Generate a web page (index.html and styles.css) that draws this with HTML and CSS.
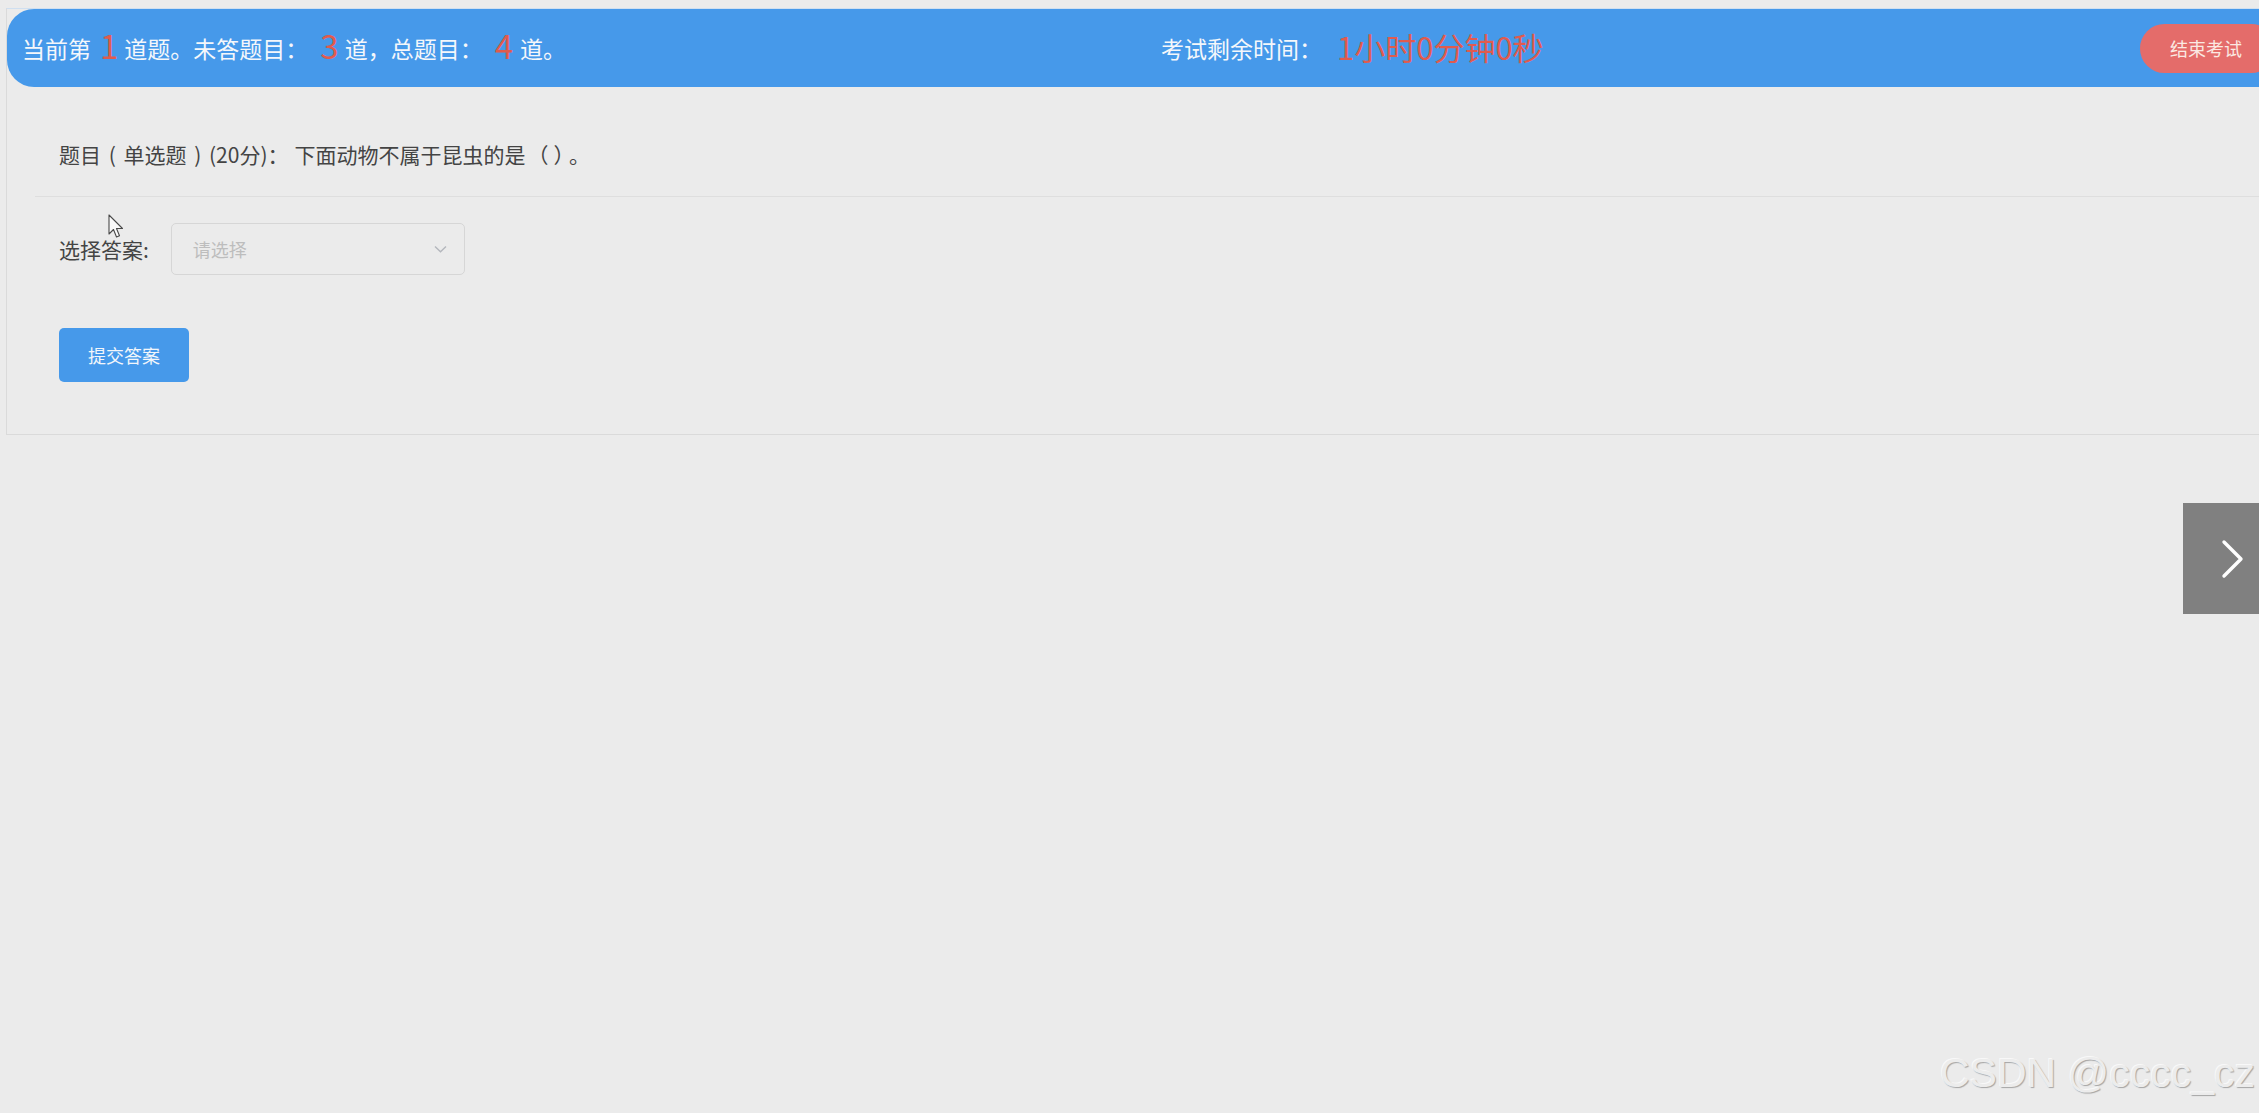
FILE: index.html
```html
<!DOCTYPE html>
<html lang="zh-CN">
<head>
<meta charset="utf-8">
<title>考试</title>
<link rel="stylesheet" href="styles.css">
</head>
<body>
<div class="page">
  <div class="exam">
    <div class="exam-header">
      <div class="progress">当前第<span class="num num-a">1</span>道题。未答题目：<span class="num num-b">3</span>道，总题目：<span class="num num-c">4</span>道。</div>
      <div class="timer">考试剩余时间：<span class="timer-value">1小时0分钟0秒</span></div>
      <button class="end-btn">结束考试</button>
    </div>
    <div class="exam-body">
      <div class="q-title"><span class="q-meta">题目 ( 单选题 ) (20分)：</span><span class="q-text">下面动物不属于昆虫的是<span class="paren">（）</span>。</span></div>
      <div class="q-body">
        <div class="answer-row">
          <span class="answer-label">选择答案:</span>
          <div class="select">
            <span class="placeholder">请选择</span>
            <svg class="chevron" width="13" height="8" viewBox="0 0 13 8"><path d="M1 1.5 L6.5 6.8 L12 1.5" fill="none" stroke="#b4b7bd" stroke-width="1.4"/></svg>
          </div>
        </div>
        <button class="submit-btn">提交答案</button>
      </div>
    </div>
  </div>
</div>

<svg class="cursor" width="16" height="26" viewBox="0 0 16 26"><path d="M1 1 L1 20 L5.5 15.5 L8.5 23 L11.5 21.8 L8.5 14.5 L14.5 14.5 Z" fill="#fafafa" stroke="#4a4a4a" stroke-width="1.1" stroke-linejoin="round"/></svg>

<div class="next-tab">
  <svg width="24" height="40" viewBox="0 0 24 40"><path d="M3 3 L20 20 L3 37" fill="none" stroke="#ffffff" stroke-width="3.4" stroke-linecap="round" stroke-linejoin="round"/></svg>
</div>

<div class="watermark">CSDN @cccc_cz</div>
</body>
</html>
```

FILE: styles.css
```css
html, body {
  margin: 0;
  padding: 0;
}
body {
  background: #ebebeb;
  font-family: "Noto Sans CJK SC", "Noto Sans", sans-serif;
  overflow: hidden;
  width: 2259px;
  height: 1113px;
  position: relative;
}
.page {
  padding: 8px 0 0 6px;
  width: 2300px;
}
.exam {
  border: 1px solid #dadada;
  border-top-color: #cfdff0;
  width: 2290px;
  box-sizing: border-box;
}
.exam-header {
  display: flex;
  align-items: center;
  height: 78px;
  background: #4699ea;
  border-radius: 27px 0 0 27px;
  padding: 0 0 0 15px;
  color: #f4f7fb;
  font-size: 23px;
  white-space: nowrap;
}
.progress {
  flex: 0 0 1139px;
  display: flex;
  align-items: center;
}
.num {
  color: #e05b4e;
  font-size: 33px;
  line-height: 30px;
  position: relative;
  top: -3px;
}
.num-a { margin: 0 6px 0 9px; }
.num-b { margin: 0 6px 0 12px; }
.num-c { margin: 0 7px 0 12px; }
.timer {
  display: flex;
  align-items: center;
}
.timer-value {
  color: #e05b4e;
  font-size: 31px;
  margin-left: 15px;
  position: relative;
  top: -2px;
}
.end-btn {
  margin-left: auto;
  margin-right: 19px;
  height: 49px;
  width: 136px;
  border: none;
  border-radius: 25px;
  background: #e46c6a;
  color: #fbe9e2;
  font-family: "Noto Sans CJK SC", sans-serif;
  font-size: 18px;
  padding: 0 0 0 4px;
  text-align: left;
  text-indent: 26px;
}
.exam-body {
  padding: 0 0 0 28px;
}
.q-title {
  padding: 55px 0 29px 24px;
  line-height: 25px;
  font-size: 21px;
  color: #444;
  border-bottom: 1px solid #dedede;
}
.q-meta {
  word-spacing: 3px;
}
.q-text {
  margin-left: 6px;
}
.paren {
  letter-spacing: 5px;
  margin-left: 2px;
}
.q-body {
  padding: 26px 0 52px 24px;
}
.answer-row {
  display: flex;
  align-items: center;
  gap: 22px;
}
.answer-label {
  font-size: 21px;
  color: #444;
}
.select {
  width: 294px;
  height: 52px;
  box-sizing: border-box;
  border: 1px solid #d6d6d6;
  border-radius: 5px;
  display: flex;
  align-items: center;
  padding: 0 17px 0 21px;
}
.placeholder {
  font-size: 18px;
  color: #bdbdbd;
  flex: 1;
}
.chevron {
  display: block;
}
.submit-btn {
  display: block;
  margin-top: 53px;
  width: 130px;
  height: 54px;
  border: none;
  border-radius: 5px;
  background: #4699ea;
  color: #f2f6fb;
  font-family: "Noto Sans CJK SC", sans-serif;
  font-size: 18px;
  padding: 0;
}
.cursor {
  position: absolute;
  left: 108px;
  top: 214px;
}
.next-tab {
  position: absolute;
  left: 2183px;
  top: 503px;
  width: 76px;
  height: 111px;
  background: #808080;
  display: flex;
  align-items: center;
  padding-left: 38px;
  box-sizing: border-box;
}
.next-tab svg {
  display: block;
}
.watermark {
  position: absolute;
  left: 1940px;
  top: 1049px;
  font-family: "Liberation Sans", Arial, sans-serif;
  font-size: 41px;
  line-height: 48px;
  color: #ececec;
  text-shadow: 1px 1px 1px rgba(0, 0, 0, 0.3), -1px -1px 0 rgba(255, 255, 255, 0.7);
  white-space: nowrap;
}
```
